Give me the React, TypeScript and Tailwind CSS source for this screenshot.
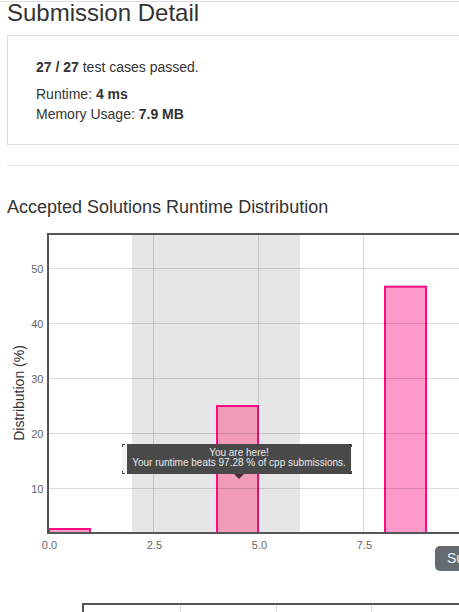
import React from 'react';

const xPx = (v: number) => 48 + v * 42;
const yPx = (v: number) => 543 - v * 5.5;

// the bar you're in gets its own, slightly warmer fill
const bars = [
  { from: 0, top: 529, fill: '#fe99cb' },
  { from: 4, top: 406, fill: '#f29bb8' },
  { from: 8, top: 286.7, fill: '#fe99cb' },
];

const yTicks = [10, 20, 30, 40, 50];
const xTicks = [
  { v: 0, label: '0.0' },
  { v: 2.5, label: '2.5' },
  { v: 5, label: '5.0' },
  { v: 7.5, label: '7.5' },
];

const Chart = () => (
  <svg width={560} height={327} viewBox="0 225 560 327" className="block">
    <rect x={132} y={235} width={168} height={297} fill="#e6e6e6" />
    {bars.map((b) => (
      <rect
        key={b.from}
        x={xPx(b.from) + 1}
        y={b.top}
        width={41}
        height={533 - b.top}
        fill={b.fill}
        stroke="#ff0a80"
        strokeWidth={2}
      />
    ))}
    {yTicks.map((t) => (
      <g key={t}>
        <line x1={49} x2={560} y1={yPx(t) + 0.5} y2={yPx(t) + 0.5} stroke="rgba(0,0,0,0.14)" />
        <text x={43.5} y={yPx(t) + 5} textAnchor="end" fontSize={11} fill="#666">
          {t}
        </text>
      </g>
    ))}
    {xTicks.map((t) => (
      <g key={t.v}>
        {t.v > 0 && (
          <line x1={xPx(t.v) + 0.5} x2={xPx(t.v) + 0.5} y1={235} y2={532} stroke="rgba(0,0,0,0.14)" />
        )}
        <text x={xPx(t.v) + 1.5} y={549} textAnchor="middle" fontSize={11} fill="#666">
          {t.label}
        </text>
      </g>
    ))}
    <rect x={47} y={233} width={513} height={2} fill="#555" />
    <rect x={47} y={233} width={2} height={301} fill="#555" />
    <rect x={47} y={532} width={513} height={2} fill="#555" />
    <text transform="translate(24 393) rotate(-90)" textAnchor="middle" fontSize={14} fill="#333">
      Distribution (%)
    </text>
  </svg>
);

const Corner = ({ className }: { className: string }) => (
  <span className={`absolute w-[3px] h-[3px] border-[#555] ${className}`} />
);

export default function App() {
  return (
    <div className="w-[459px] h-[612px] overflow-hidden bg-white text-[#333] font-[family-name:'Liberation_Sans',Arial,sans-serif]">
      <div className="mt-px h-px bg-[#ddd] w-[600px]" />
      <div className="w-[600px]">
        <h3 className="-mt-px ml-[7px] text-[24px] leading-[24px]">Submission Detail</h3>

        <div className="mt-[10px] ml-[7px] w-[560px] border border-[#ddd] pt-[21px] pb-[20px] pl-[28px] text-[14px] leading-[20px]">
          <p>
            <b>27 / 27</b> test cases passed.
          </p>
          <p className="mt-[7px]">
            Runtime: <b>4 ms</b>
          </p>
          <p>
            Memory Usage: <b>7.9 MB</b>
          </p>
        </div>

        <div className="mt-[20px] ml-[7px] h-px bg-[#e5e5e5]" />

        <h4 className="mt-[31px] ml-[7px] text-[18px] leading-[20px]">Accepted Solutions Runtime Distribution</h4>

        <div className="relative mt-[8px]">
          <Chart />
          <div className="absolute left-[122px] top-[219px] w-[230px] h-[30px] bg-[#f4f4f4]">
            <Corner className="left-0 top-0 border-l border-t" />
            <Corner className="left-0 bottom-0 border-l border-b" />
            <Corner className="right-0 top-0 border-r border-t" />
            <Corner className="right-0 bottom-0 border-r border-b" />
          </div>
          <div className="absolute left-[127px] top-[219px] w-[224px] h-[30px] bg-[rgba(0,0,0,0.7)] pt-[4px] text-center text-[10px] leading-[10px] text-[#e8e8e8]">
            <div>You are here!</div>
            <div>Your runtime beats 97.28 % of cpp submissions.</div>
            <span className="absolute left-[107px] top-[30px] w-0 h-0 border-x-[5px] border-x-transparent border-t-[5px] border-t-[rgba(0,0,0,0.7)]" />
          </div>
        </div>

        <div className="-mt-[6px] ml-[435px] flex">
          <button className="h-[25px] rounded-[5px] bg-[#656b70] pl-[12px] pr-[12px] text-[14px] leading-[25px] text-[#eaf3fb]">
            Submit Again
          </button>
        </div>

        <div className="mt-[32px] ml-[82px] flex h-[40px] w-[500px] border-2 border-[#555]">
          <div className="w-[96px] shrink-0" />
          <div className="w-[96px] shrink-0 border-l border-[#ddd]" />
          <div className="w-[95px] shrink-0 border-l border-[#ddd]" />
          <div className="w-[96px] shrink-0 border-l border-[#ddd]" />
        </div>
      </div>
    </div>
  );
}
